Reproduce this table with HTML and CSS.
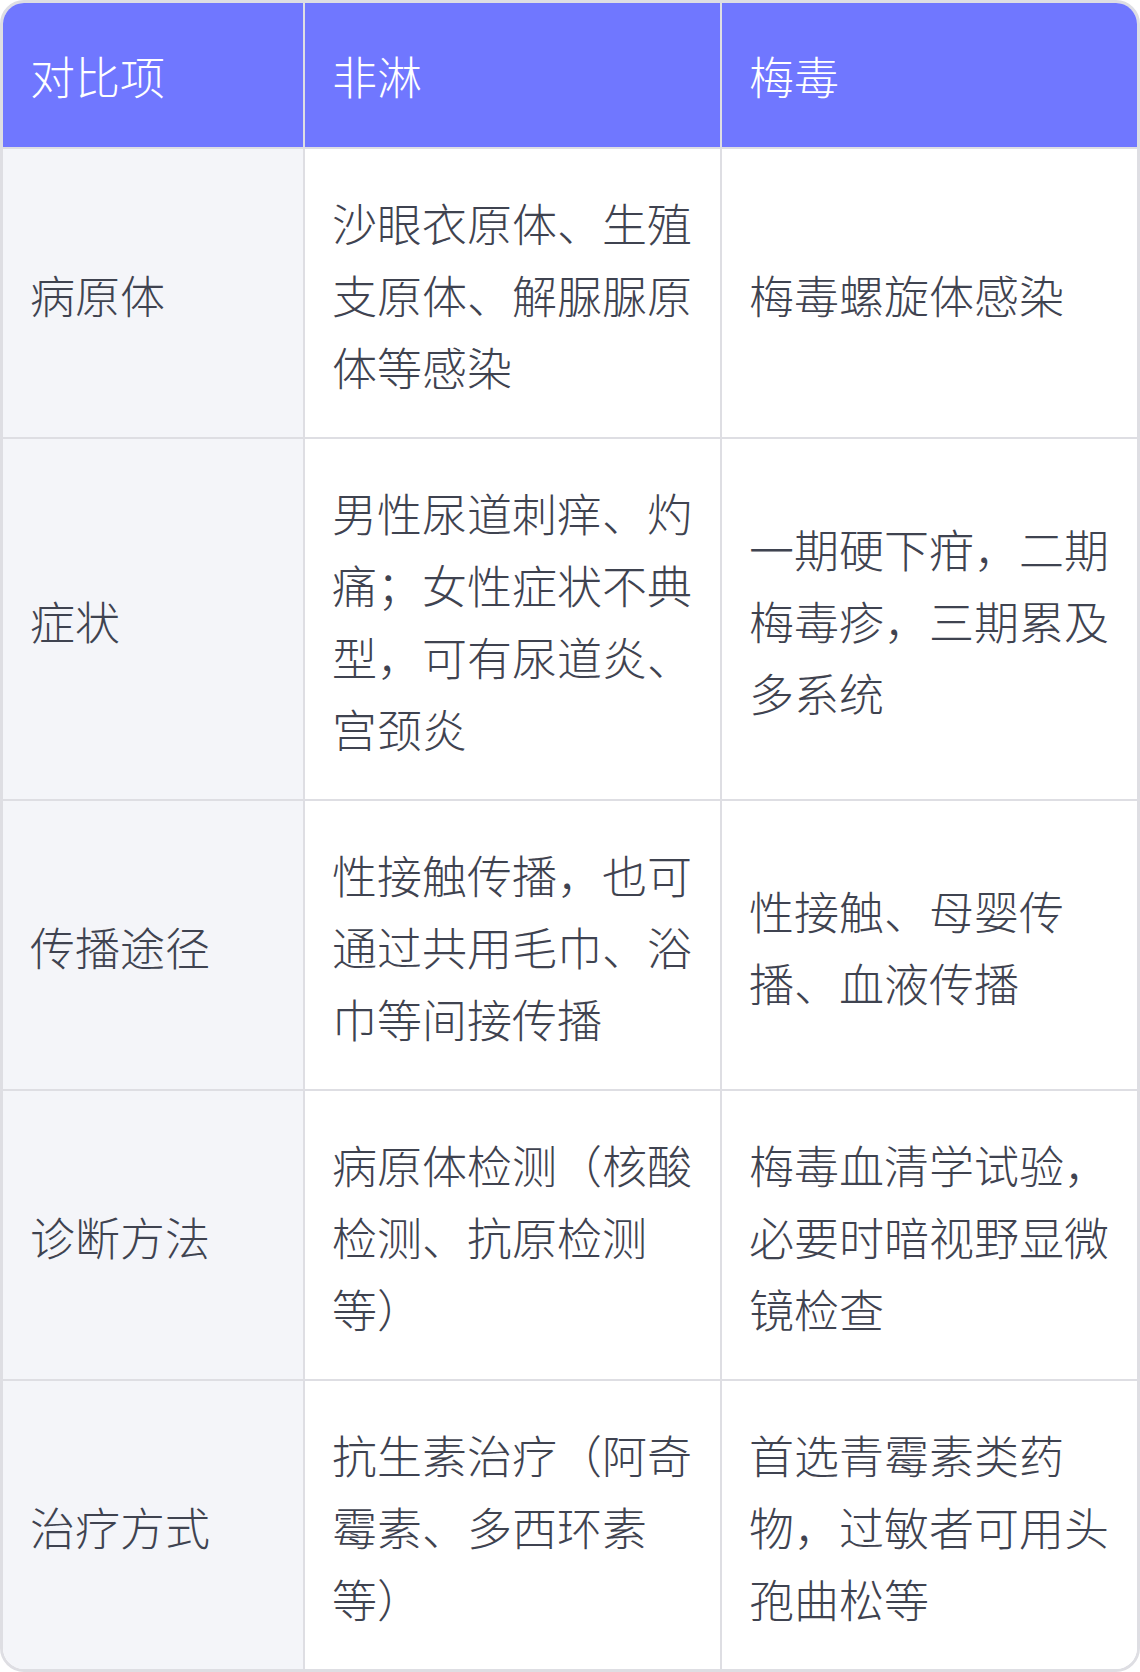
FILE: index.html
```html
<!DOCTYPE html>
<html lang="zh-CN">
<head>
<meta charset="utf-8">
<title>非淋与梅毒对比</title>
<link rel="stylesheet" href="styles.css">
</head>
<body>
<div class="table-wrap">
  <table class="compare">
    <colgroup>
      <col class="col-item">
      <col class="col-a">
      <col class="col-b">
    </colgroup>
    <thead>
      <tr>
        <th>对比项</th>
        <th>非淋</th>
        <th>梅毒</th>
      </tr>
    </thead>
    <tbody>
      <tr>
        <td class="label">病原体</td>
        <td>沙眼衣原体、生殖支原体、解脲脲原体等感染</td>
        <td>梅毒螺旋体感染</td>
      </tr>
      <tr>
        <td class="label">症状</td>
        <td>男性尿道刺痒、灼痛；女性症状不典型，可有尿道炎、宫颈炎</td>
        <td>一期硬下疳，二期梅毒疹，三期累及多系统</td>
      </tr>
      <tr>
        <td class="label">传播途径</td>
        <td>性接触传播，也可通过共用毛巾、浴巾等间接传播</td>
        <td>性接触、母婴传播、血液传播</td>
      </tr>
      <tr>
        <td class="label">诊断方法</td>
        <td>病原体检测（核酸检测、抗原检测等）</td>
        <td>梅毒血清学试验，必要时暗视野显微镜检查</td>
      </tr>
      <tr>
        <td class="label">治疗方式</td>
        <td>抗生素治疗（阿奇霉素、多西环素等）</td>
        <td>首选青霉素类药物，过敏者可用头孢曲松等</td>
      </tr>
    </tbody>
  </table>
</div>
</body>
</html>
```
FILE: styles.css
```css
html, body {
  margin: 0;
  padding: 0;
  background: #ffffff;
}

body {
  font-family: "Noto Sans CJK SC", "Noto Sans", sans-serif;
}

.table-wrap {
  width: 1140px;
  box-sizing: border-box;
  border: 3px solid #dedee3;
  border-radius: 24px;
  overflow: hidden;
  background: #ffffff;
}

.compare {
  width: 1134px;
  border-collapse: separate;
  border-spacing: 0;
  table-layout: fixed;
}

.col-item {
  width: 302px;
}

.col-a {
  width: 417px;
}

.col-b {
  width: 415px;
}

.compare th,
.compare td {
  box-sizing: border-box;
  padding: 38px 27px 34px;
  font-size: 45px;
  line-height: 72px;
  font-weight: 300;
  text-align: left;
  vertical-align: middle;
  border-right: 2px solid #dedee3;
  border-bottom: 2px solid #dedee3;
  word-break: break-all;
}

.compare th {
  padding-top: 37px;
  padding-bottom: 35px;
  background: #7077ff;
  color: #ffffff;
}

.compare th:last-child,
.compare td:last-child {
  border-right: none;
}

.compare tbody tr:last-child td {
  border-bottom: none;
}

.compare td {
  color: #3f4350;
  background: #ffffff;
}

.compare td.label {
  background: #f4f5f9;
}
```
